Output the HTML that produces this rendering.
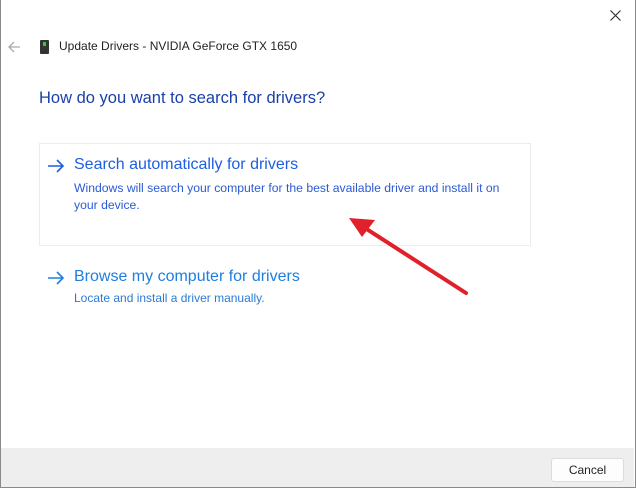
<!DOCTYPE html>
<html><head><meta charset="utf-8"><style>
body{margin:0;width:636px;height:488px;overflow:hidden;background:#fff;font-family:"Liberation Sans",sans-serif;position:relative}
.win{position:absolute;left:0;top:0;width:634px;height:487px;border:1px solid #8a8a8a;border-top:none;box-sizing:content-box}
.t{position:absolute;white-space:nowrap}
</style></head><body>
<div class="win"></div>
<div style="position:absolute;left:1px;top:448px;width:633px;height:39px;background:#eeeeee"></div>
<svg style="position:absolute;left:609px;top:9px" width="13" height="13"><path d="M1.5 1.5L11.5 11.5M11.5 1.5L1.5 11.5" stroke="#333" stroke-width="1.2"/></svg>
<svg style="position:absolute;left:7px;top:40px" width="14" height="14"><path d="M13 7H2M7 2L2 7L7 12" stroke="#aaa" stroke-width="1.3" fill="none"/></svg>
<div style="position:absolute;left:40px;top:40px;width:9px;height:14px;background:#333;border-radius:1px"></div>
<div style="position:absolute;left:43px;top:42px;width:3px;height:4px;background:#3c3"></div>
<div class="t" style="left:59px;top:39px;font-size:12px;color:#222">Update Drivers - NVIDIA GeForce GTX 1650</div>
<div class="t" style="left:39px;top:89px;font-size:16.5px;color:#1a3fa8">How do you want to search for drivers?</div>
<div style="position:absolute;left:39px;top:143px;width:492px;height:103px;border:1px solid #ececec;box-sizing:border-box"></div>
<svg style="position:absolute;left:47px;top:159px" width="18" height="14"><path d="M1 7H16M10 1L16 7L10 13" stroke="#1e5fe0" stroke-width="1.6" fill="none"/></svg>
<div class="t" style="left:74px;top:156px;font-size:16px;color:#1e5fe0">Search automatically for drivers</div>
<div class="t" style="left:74px;top:180px;font-size:12.2px;line-height:17px;color:#2c5ad6">Windows will search your computer for the best available driver and install it on<br>your device.</div>
<svg style="position:absolute;left:47px;top:271px" width="18" height="14"><path d="M1 7H16M10 1L16 7L10 13" stroke="#1e7fe0" stroke-width="1.6" fill="none"/></svg>
<div class="t" style="left:74px;top:268px;font-size:16px;color:#1e7fe0">Browse my computer for drivers</div>
<div class="t" style="left:74px;top:291px;font-size:12px;color:#2a7bd8">Locate and install a driver manually.</div>
<svg style="position:absolute;left:0;top:0" width="636" height="488"><path d="M466 293L365 228" stroke="#e0202a" stroke-width="4" stroke-linecap="round"/><path d="M349 218L375 220L362 237Z" fill="#e0202a"/></svg>
<div style="position:absolute;left:551px;top:458px;width:73px;height:24px;background:#fdfdfd;border:1px solid #dcdcdc;border-radius:3px;box-sizing:border-box;font-size:12px;color:#222;text-align:center;line-height:22px">Cancel</div>
</body></html>
